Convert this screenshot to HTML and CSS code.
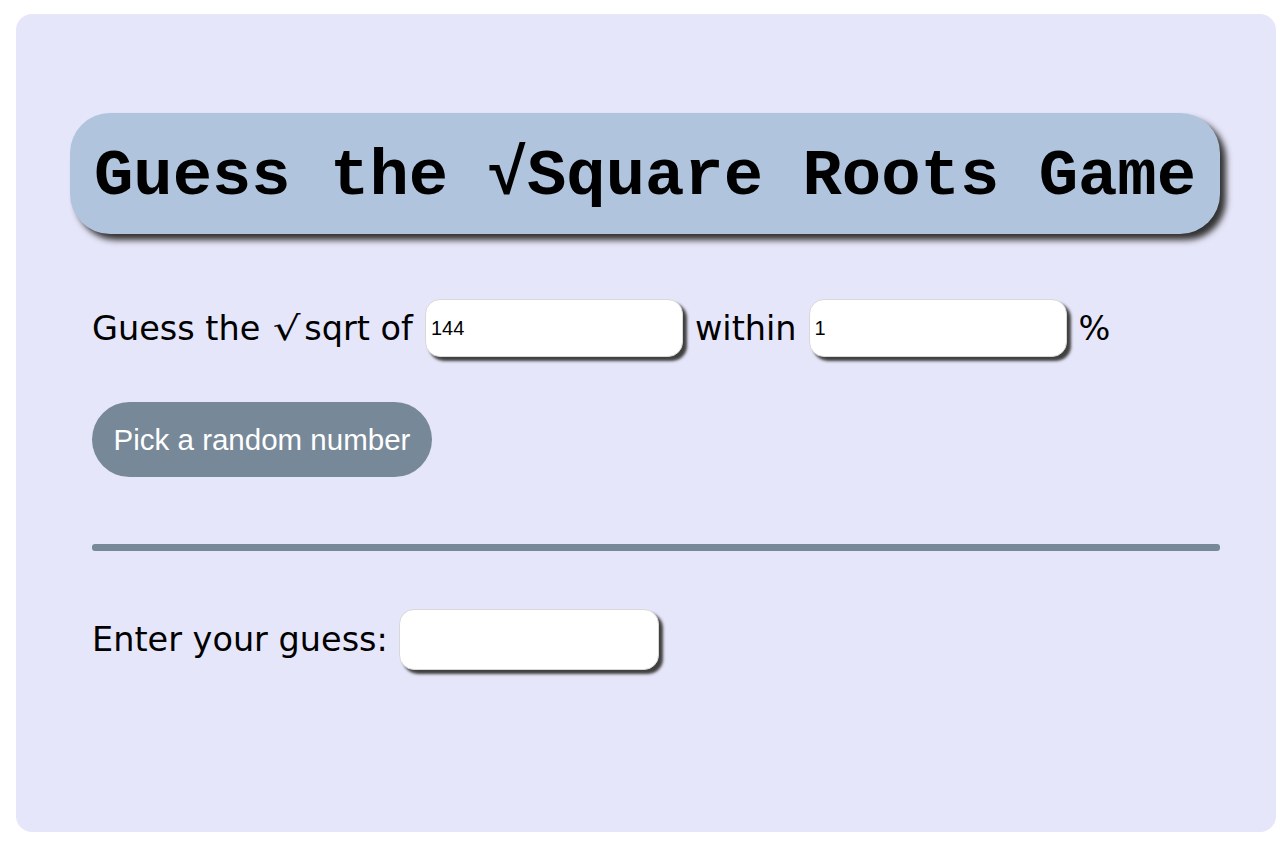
FILE: index.html
```html
<!DOCTYPE html>
<html>
<head>
<meta charset="utf-8">
<link rel="stylesheet" href="styles.css">
</head>
<body>
<main class="card">
  <h1 class="title">Guess the √Square Roots Game</h1>
  <div class="row row-target">
    <span class="label">Guess the <span class="root">√</span>sqrt of</span>
    <input class="field" type="text" value="144">
    <span class="label">within</span>
    <input class="field" type="text" value="1">
    <span class="label">%</span>
  </div>
  <button class="pick">Pick a random number</button>
  <div class="rule"></div>
  <div class="row row-guess">
    <span class="label">Enter your guess:</span>
    <input class="field field-guess" type="text" value="">
  </div>
</main>
</body>
</html>
```
FILE: styles.css
```css
html, body {
  margin: 0;
  padding: 0;
  background: #ffffff;
}
body {
  padding: 14px 12px 0 16px;
  font-family: "DejaVu Sans", sans-serif;
}
.card {
  box-sizing: border-box;
  width: 1260px;
  height: 818px;
  background: #e6e6fa;
  border-radius: 16px;
  padding: 99px 56px 0 76px;
  display: flex;
  flex-direction: column;
  align-items: flex-start;
}
.title {
  box-sizing: border-box;
  margin: 0 0 0 -22px;
  width: 1150px;
  height: 121px;
  background: #b0c4de;
  border-radius: 40px;
  box-shadow: 6px 6px 6px #333;
  font-family: "Liberation Mono", "Courier New", monospace;
  font-weight: bold;
  font-size: 65.6px;
  line-height: 127px;
  text-align: center;
  color: #000;
  white-space: nowrap;
}
.row {
  display: flex;
  align-items: center;
  gap: 12px;
}
.row-target {
  margin-top: 65px;
}
.label {
  font-size: 33.5px;
  color: #000;
  white-space: nowrap;
}
.root {
  display: inline-block;
  padding: 0 7px 0 6px;
  margin-left: -1px;
  transform: scaleX(1.3);
  transform-origin: center;
}
.field {
  box-sizing: border-box;
  width: 258px;
  height: 58px;
  border: 1px solid #d8d8d8;
  border-radius: 15px;
  background: #fff;
  box-shadow: 4px 4px 3px #404040;
  font-family: "Liberation Sans", Arial, sans-serif;
  font-size: 20px;
  padding: 0 5px;
  color: #000;
  outline: none;
}
.pick {
  margin-top: 45px;
  width: 340px;
  height: 75px;
  border: none;
  border-radius: 38px;
  background: #778899;
  color: #fff;
  font-family: "Liberation Sans", Arial, sans-serif;
  font-size: 29.5px;
  padding: 0;
}
.rule {
  margin-top: 67px;
  width: 1128px;
  height: 7px;
  background: #778899;
  border-radius: 3px;
}
.row-guess {
  margin-top: 58px;
}
.row-guess .label + .field {
  margin-left: -1px;
}
.field-guess {
  width: 260px;
  height: 61px;
}
```
